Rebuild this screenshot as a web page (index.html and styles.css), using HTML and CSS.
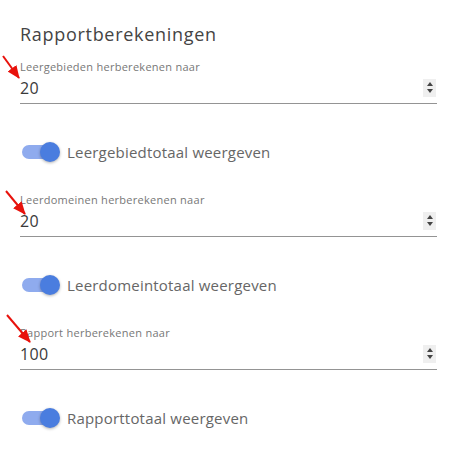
FILE: index.html
```html
<!DOCTYPE html>
<html>
<head>
<meta charset="utf-8">
<link rel="stylesheet" href="styles.css">
</head>
<body>
<div class="page">
  <h2 class="title">Rapportberekeningen</h2>

  <div class="field">
    <label class="field-label">Leergebieden herberekenen naar</label>
    <div class="field-input">
      <span class="value">20</span>
      <span class="spinner"><span class="up"></span><span class="down"></span></span>
    </div>
  </div>
  <div class="switch-row">
    <span class="switch"><span class="track"></span><span class="knob"></span></span>
    <span class="switch-label">Leergebiedtotaal weergeven</span>
  </div>

  <div class="field">
    <label class="field-label">Leerdomeinen herberekenen naar</label>
    <div class="field-input">
      <span class="value">20</span>
      <span class="spinner"><span class="up"></span><span class="down"></span></span>
    </div>
  </div>
  <div class="switch-row">
    <span class="switch"><span class="track"></span><span class="knob"></span></span>
    <span class="switch-label">Leerdomeintotaal weergeven</span>
  </div>

  <div class="field">
    <label class="field-label">Rapport herberekenen naar</label>
    <div class="field-input">
      <span class="value">100</span>
      <span class="spinner"><span class="up"></span><span class="down"></span></span>
    </div>
  </div>
  <div class="switch-row">
    <span class="switch"><span class="track"></span><span class="knob"></span></span>
    <span class="switch-label">Rapporttotaal weergeven</span>
  </div>

  <svg class="arrows" width="455" height="454" viewBox="0 0 455 454">
    <defs>
      <marker id="head" markerWidth="13" markerHeight="11" refX="12" refY="5.5" orient="auto" markerUnits="userSpaceOnUse">
        <path d="M0,0 L13,5.5 L0,11 Z" fill="#e8120c"/>
      </marker>
    </defs>
    <line x1="3" y1="56" x2="19" y2="78" stroke="#e8120c" stroke-width="2" marker-end="url(#head)"/>
    <line x1="6" y1="191" x2="25" y2="214" stroke="#e8120c" stroke-width="2" marker-end="url(#head)"/>
    <line x1="7" y1="315" x2="30" y2="342" stroke="#e8120c" stroke-width="2" marker-end="url(#head)"/>
  </svg>
</div>
</body>
</html>
```

FILE: styles.css
```css
html, body {
  margin: 0;
  padding: 0;
  background: #ffffff;
}
body {
  font-family: "Open Sans", "Noto Sans", sans-serif;
  color: #444;
}
.page {
  position: relative;
  width: 455px;
  height: 454px;
  padding: 22px 18px 0 20px;
  box-sizing: border-box;
}
.title {
  margin: 0;
  font-size: 18px;
  line-height: 24px;
  font-weight: 400;
  letter-spacing: 0.7px;
  color: #444;
}
.field {
  margin-top: 14px;
  display: flex;
  flex-direction: column;
}
.field-label {
  font-size: 11px;
  line-height: 14px;
  letter-spacing: 0.27px;
  color: #777;
}
.field-input {
  display: flex;
  align-items: center;
  justify-content: space-between;
  height: 30px;
  padding-bottom: 2px;
  box-sizing: border-box;
  border-bottom: 1px solid #949494;
}
.value {
  font-size: 16px;
  color: #3a3a3a;
  line-height: 20px;
  letter-spacing: 0.3px;
}
.spinner {
  width: 13px;
  height: 18px;
  background: #efefef;
  margin-right: 1px;
  display: flex;
  flex-direction: column;
  align-items: center;
  justify-content: center;
  gap: 3px;
}
.spinner .up {
  width: 0; height: 0;
  border-left: 3.5px solid transparent;
  border-right: 3.5px solid transparent;
  border-bottom: 4px solid #444;
}
.spinner .down {
  width: 0; height: 0;
  border-left: 3.5px solid transparent;
  border-right: 3.5px solid transparent;
  border-top: 4px solid #444;
}
.switch-row {
  display: flex;
  align-items: center;
  height: 22px;
  margin-top: 37px;
  margin-bottom: 30px;
}
.switch {
  position: relative;
  width: 40px;
  height: 22px;
}
.track {
  position: absolute;
  left: 2px;
  top: 4px;
  width: 34px;
  height: 14px;
  border-radius: 7px;
  background: #8fabee;
}
.knob {
  position: absolute;
  left: 20px;
  top: 1px;
  width: 20px;
  height: 20px;
  border-radius: 50%;
  background: #4a7ddf;
  box-shadow: 0 1px 3px rgba(0,0,0,0.3);
}
.switch-label {
  margin-left: 7px;
  font-size: 15px;
  letter-spacing: 0.2px;
  color: #666;
}
.arrows {
  position: absolute;
  left: 0;
  top: 0;
  pointer-events: none;
}
```
